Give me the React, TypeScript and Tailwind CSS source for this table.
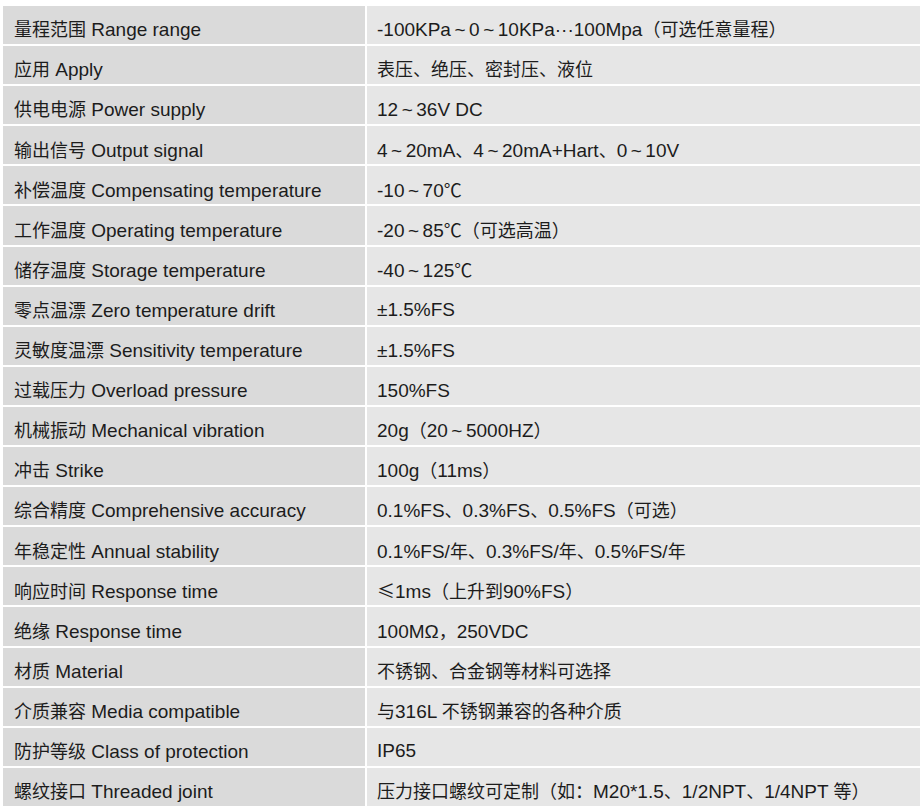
const rows: [string, string][] = [
  ['量程范围 Range range', '-100KPa～0～10KPa···100Mpa（可选任意量程）'],
  ['应用 Apply', '表压、绝压、密封压、液位'],
  ['供电电源 Power supply', '12～36V DC'],
  ['输出信号 Output signal', '4～20mA、4～20mA+Hart、0～10V'],
  ['补偿温度 Compensating temperature', '-10～70℃'],
  ['工作温度 Operating temperature', '-20～85℃（可选高温）'],
  ['储存温度 Storage temperature', '-40～125℃'],
  ['零点温漂 Zero temperature drift', '±1.5%FS'],
  ['灵敏度温漂 Sensitivity temperature', '±1.5%FS'],
  ['过载压力 Overload pressure', '150%FS'],
  ['机械振动 Mechanical vibration', '20g（20～5000HZ）'],
  ['冲击 Strike', '100g（11ms）'],
  ['综合精度 Comprehensive accuracy', '0.1%FS、0.3%FS、0.5%FS（可选）'],
  ['年稳定性 Annual stability', '0.1%FS/年、0.3%FS/年、0.5%FS/年'],
  ['响应时间 Response time', '≤1ms（上升到90%FS）'],
  ['绝缘 Response time', '100MΩ，250VDC'],
  ['材质 Material', '不锈钢、合金钢等材料可选择'],
  ['介质兼容 Media compatible', '与316L 不锈钢兼容的各种介质'],
  ['防护等级 Class of protection', 'IP65'],
  ['螺纹接口 Threaded joint', '压力接口螺纹可定制（如：M20*1.5、1/2NPT、1/4NPT 等）'],
];

// CJK glyphs sit a little smaller than the latin text in the original
const isCjk = (ch: string) => /[\u2103\u2264\u3000-\u9fff\uff00-\uff5d\uff5f-\uffef]/.test(ch);

function Mixed({ text }: { text: string }) {
  const runs: { kind: 'cjk' | 'lat' | 'tilde'; s: string }[] = [];
  for (const ch of text) {
    const kind = ch === '～' ? 'tilde' : isCjk(ch) ? 'cjk' : 'lat';
    const last = runs[runs.length - 1];
    if (last && last.kind === kind && kind !== 'tilde') last.s += ch;
    else runs.push({ kind, s: ch });
  }
  return (
    <span className="whitespace-pre">
      {runs.map((r, i) => {
        if (r.kind === 'tilde') return <span key={i} className="px-[3.5px] text-[19px]">~</span>;
        if (r.kind === 'cjk') return <span key={i} className="font-['Noto_Sans_CJK_SC'] text-[18px]">{r.s}</span>;
        return <span key={i} className="text-[19px]">{r.s}</span>;
      })}
    </span>
  );
}

export default function App() {
  return (
    <div className="min-h-[810px] bg-white pt-[6px] pl-[3px] font-['Liberation_Sans','Noto_Sans_CJK_SC',sans-serif] text-[19px] text-[#1c1c1c]">
      <div className="flex flex-col gap-[2px]">
        {rows.map(([label, value], i) => (
          <div key={i} className="flex h-[38.1px] gap-[2px]">
            <div className="flex w-[362px] items-center bg-[#dadada] pl-[11px] pt-[10px]">
              <Mixed text={label} />
            </div>
            <div className="flex flex-1 items-center bg-[#e6e6e6] pl-[10px] pt-[10px]">
              <Mixed text={value} />
            </div>
          </div>
        ))}
      </div>
    </div>
  );
}
